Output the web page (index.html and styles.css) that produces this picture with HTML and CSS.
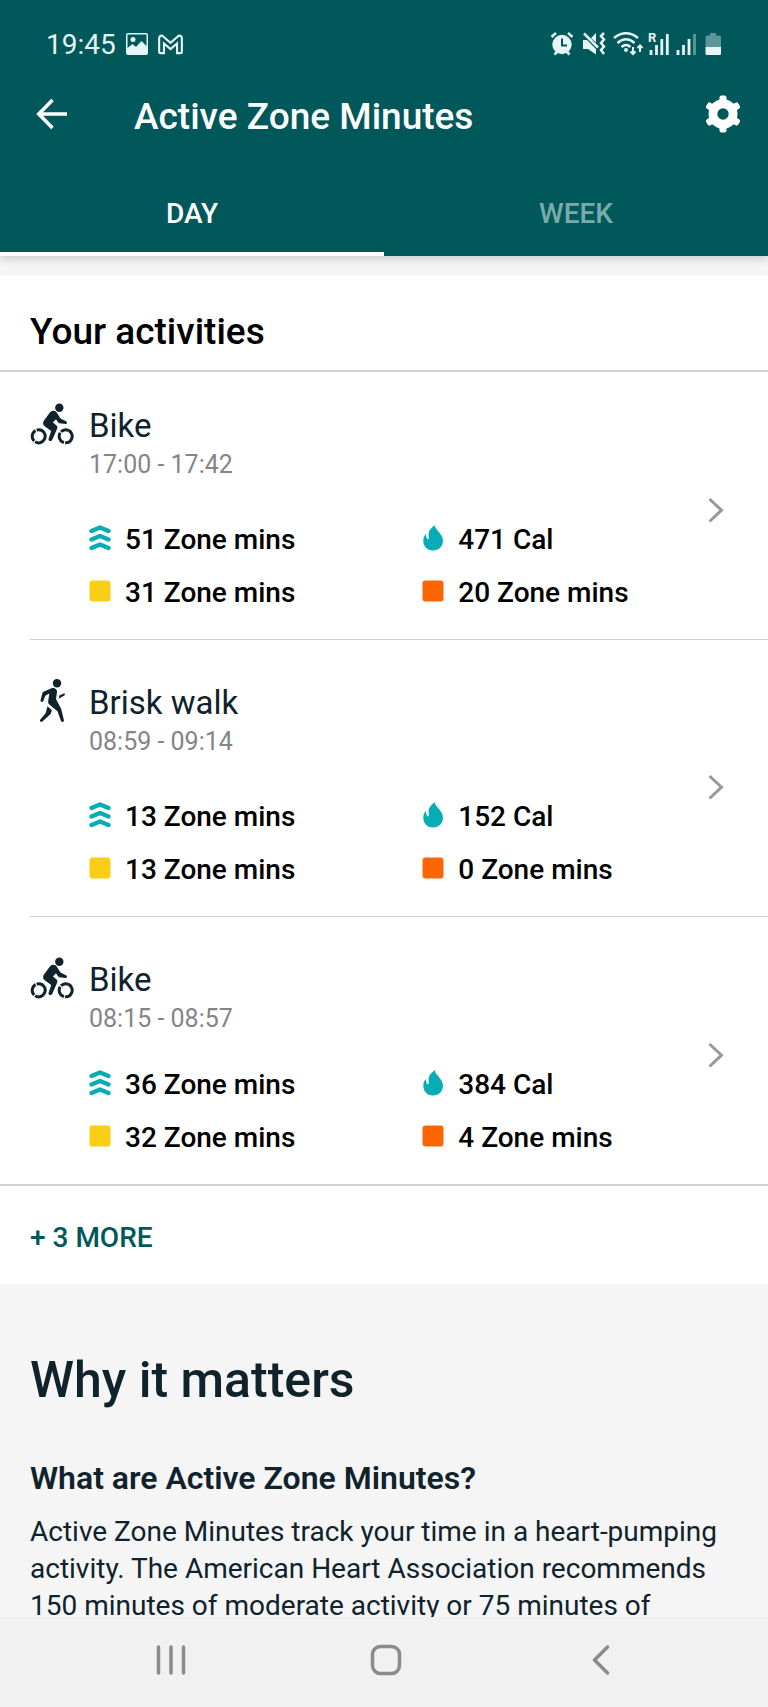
FILE: index.html
```html
<!DOCTYPE html>
<html lang="en">
<head>
<meta charset="utf-8">
<meta name="viewport" content="width=device-width, initial-scale=1">
<title>Active Zone Minutes</title>
<link rel="stylesheet" href="styles.css">
</head>
<body class="screen">
<svg class="sprite" aria-hidden="true">
  <symbol id="bike" viewBox="0 0 44 44">
    <circle cx="29.3" cy="5.7" r="4.2"/>
    <path d="M22 9C24 8.200 26 9 27 11L30.500 16.500L36 19.200C37.600 20 37.300 22 35.500 21.900L29.500 21.200C28.800 21 28.300 20.700 27.800 20L26 17.300L22.900 20.600L26.300 23.200C27.500 24.200 27.600 25.300 27.200 26.500L22.300 37.800C21.300 40 17.900 39 18.600 36.700L21.200 28.900L15 24.500C12.800 22.900 12.500 20.500 14 18.500L19.500 11C20.200 10 21 9.400 22 9Z"/>
    <g fill="none" stroke="currentColor" stroke-width="3">
      <circle cx="8.700" cy="34.300" r="6.500" stroke-dasharray="17.500 1.200 12 1.200 7.740 1.200" transform="rotate(-36 8.700 34.300)"/>
      <circle cx="35.700" cy="34.300" r="6.500" stroke-dasharray="17.500 1.200 12 1.200 7.740 1.200" transform="rotate(-64 35.700 34.300)"/>
    </g>
  </symbol>
  <symbol id="walk" viewBox="0 0 44 44">
    <circle cx="27" cy="4.200" r="4.200"/>
    <path d="M21.500 9.200C24 8.300 27.300 10 27 13L26 20L30.500 28.500C31 29.600 31.300 30.500 31.600 31.500L34 41.500C34.200 43 31.500 43.500 31 42L27.500 32.300L19.300 25.500C18.300 24.600 18 23.500 18.200 22.200L19.300 14.500L15.300 16.700L13.300 22C12.700 23.600 10.300 23 10.500 21.300L12.300 14.500C12.600 13.500 13 13.100 14 12.500Z"/>
    <path d="M17.500 27.300L21.900 31.200L20.600 35L12.400 42.500C11 43.500 9.200 42 10.200 40.700L15.700 34Z"/>
    <path d="M28.600 19.700L29.400 16.400L33.700 14.400C35 14 35.300 16 34.300 16.500Z"/>
  </symbol>
  <symbol id="zone" viewBox="0 0 22 26">
    <path d="M2.500 6L11 2.500L19.500 6M2.500 14.500L11 11L19.500 14.500M2.500 23L11 19.500L19.500 23" fill="none" stroke="currentColor" stroke-width="4.400" stroke-linecap="round" stroke-linejoin="round"/>
  </symbol>
  <symbol id="flame" viewBox="0 0 22 26">
    <path d="M12.500 0C13 5 21 8.500 21 15.800C21 21.500 16.700 25.500 11 25.500C5.300 25.500 1.300 21.500 1.300 15.800C1.300 12.500 2.500 10.800 3.700 9C4 11.500 4.600 13.300 6 14.700C7.400 13.400 6.500 11.500 6.600 9C6.700 5 9.500 3.500 12.500 0Z"/>
  </symbol>
  <symbol id="square" viewBox="0 0 22 22"><rect x="0.500" y="0.500" width="21" height="21" rx="3"/></symbol>
  <symbol id="chevron" viewBox="0 0 30 30"><path d="M9.500 4L21.500 15.200L9.500 26.500" fill="none" stroke="currentColor" stroke-width="3"/></symbol>
</svg>

<header class="header">
  <div class="status">
    <span class="status-time">19:45</span>
    <svg class="icon-photo" viewBox="0 0 22 22"><path fill-rule="evenodd" d="M2 0H20Q22 0 22 2V20Q22 22 20 22H2Q0 22 0 20V2Q0 0 2 0ZM1.500 1.500V15L6.500 11L10 14L15.500 8L20.500 13V1.500Z"/><circle cx="7" cy="6.500" r="2.500"/></svg>
    <svg class="icon-mail" viewBox="0 0 26 21"><path d="M1.200 18V4Q1.200 1.200 4.200 1.200L13 8.700L21.800 1.200Q24.800 1.200 24.800 4V18Q24.800 19.500 23.300 19.500H19.800V9.500L13 15.200L6.200 9.500V19.500H2.700Q1.200 19.500 1.200 18Z" fill="none" stroke="currentColor" stroke-width="2.200"/></svg>
    <svg class="status-icons" viewBox="0 0 172 24" role="img" aria-label="Alarm, vibrate, Wi-Fi, signal, battery">
      <circle cx="12" cy="12.500" r="9.700"/>
      <path d="M1.500 5L6 1M18 1L22.500 5M4.500 22.500L7 20M19.500 22.500L17 20" fill="none" stroke="currentColor" stroke-width="2.500"/>
      <path d="M12 6.500V13.500H17" class="cut"/>
      <path d="M33 8H37L46 17V22.500L38 17H33ZM41 6L46 1V10.500Z"/>
      <path d="M34 1.500L48 15.500" fill="none" stroke="currentColor" stroke-width="2.500"/>
      <path d="M54 1L51 4L54 7.500L51 11L54 14.500L51 18L54 22" fill="none" stroke="currentColor" stroke-width="2.500"/>
      <path d="M64 6Q76 -3.500 88 6M67.500 11Q76 3.500 84.500 11M71.500 15Q76 11 80.500 15" fill="none" stroke="currentColor" stroke-width="2.500"/>
      <circle cx="76" cy="18" r="2"/>
      <path d="M83 15V22M80.500 19.500L83 22L85.500 19.500M90 20V13.500M87.500 16L90 13.500L92.500 16" fill="none" stroke="currentColor" stroke-width="2"/>
      <text x="98" y="10" class="roaming">R</text>
      <path d="M101 18V23M106.500 13V23M111.800 7V23M117.300 2V23M128 18V23M133.500 13V23M139 7V23" fill="none" stroke="currentColor" stroke-width="2.800"/>
      <path d="M144.500 2V23" fill="none" stroke="currentColor" stroke-width="2.800" opacity=".4"/>
      <path d="M160 1H166V3.500H169.500Q171 3.500 171 5V15H155.500V5Q155.500 3.500 157 3.500H160Z" opacity=".4"/>
      <path d="M155.500 15H171V21.500Q171 23 169.500 23H157Q155.500 23 155.500 21.500Z"/>
    </svg>
  </div>
  <div class="appbar">
    <button class="icon-button" aria-label="Back"><svg class="icon-back" viewBox="0 0 32 32"><path d="M16.500 2L2.800 16L16.500 30M3 16H31" fill="none" stroke="currentColor" stroke-width="3.600"/></svg></button>
    <h1 class="title">Active Zone Minutes</h1>
    <button class="icon-button" aria-label="Settings"><svg class="icon-gear" viewBox="0 0 38 38">
      <g fill="currentColor"><rect x="15.500" y="0.500" width="7" height="37" rx="2"/><rect x="15.500" y="0.500" width="7" height="37" rx="2" transform="rotate(60 19 19)"/><rect x="15.500" y="0.500" width="7" height="37" rx="2" transform="rotate(120 19 19)"/><path d="M19 3L26 6L32.500 10.800L33.500 19L32.500 27.200L26 32L19 35L12 32L5.500 27.200L4.500 19L5.500 10.800L12 6Z"/></g><circle class="hole" cx="19" cy="19" r="5.700"/></svg></button>
  </div>
  <nav class="tabs" aria-label="Period">
    <button class="tab tab-active" aria-current="page">DAY</button>
    <button class="tab">WEEK</button>
  </nav>
</header>

<main class="content">
  <section class="activities">
    <h2 class="section-title">Your activities</h2>
    <a class="activity activity-first" href="#">
      <svg class="sport"><use href="#bike"/></svg>
      <div class="details">
        <h3 class="name">Bike</h3>
        <p class="time">17:00 - 17:42</p>
        <ul class="stats">
          <li class="stat"><svg class="stat-icon teal"><use href="#zone"/></svg>51 Zone mins</li>
          <li class="stat"><svg class="stat-icon teal"><use href="#flame"/></svg>471 Cal</li>
          <li class="stat"><svg class="stat-icon yellow"><use href="#square"/></svg>31 Zone mins</li>
          <li class="stat"><svg class="stat-icon orange"><use href="#square"/></svg>20 Zone mins</li>
        </ul>
      </div>
      <svg class="chevron"><use href="#chevron"/></svg>
    </a>
    <a class="activity" href="#">
      <svg class="sport"><use href="#walk"/></svg>
      <div class="details">
        <h3 class="name">Brisk walk</h3>
        <p class="time">08:59 - 09:14</p>
        <ul class="stats">
          <li class="stat"><svg class="stat-icon teal"><use href="#zone"/></svg>13 Zone mins</li>
          <li class="stat"><svg class="stat-icon teal"><use href="#flame"/></svg>152 Cal</li>
          <li class="stat"><svg class="stat-icon yellow"><use href="#square"/></svg>13 Zone mins</li>
          <li class="stat"><svg class="stat-icon orange"><use href="#square"/></svg>0 Zone mins</li>
        </ul>
      </div>
      <svg class="chevron"><use href="#chevron"/></svg>
    </a>
    <a class="activity activity-last" href="#">
      <svg class="sport"><use href="#bike"/></svg>
      <div class="details">
        <h3 class="name">Bike</h3>
        <p class="time">08:15 - 08:57</p>
        <ul class="stats">
          <li class="stat"><svg class="stat-icon teal"><use href="#zone"/></svg>36 Zone mins</li>
          <li class="stat"><svg class="stat-icon teal"><use href="#flame"/></svg>384 Cal</li>
          <li class="stat"><svg class="stat-icon yellow"><use href="#square"/></svg>32 Zone mins</li>
          <li class="stat"><svg class="stat-icon orange"><use href="#square"/></svg>4 Zone mins</li>
        </ul>
      </div>
      <svg class="chevron"><use href="#chevron"/></svg>
    </a>
    <button class="more">+ 3 MORE</button>
  </section>
  <section class="why">
    <h2 class="why-title">Why it matters</h2>
    <h3 class="why-question">What are Active Zone Minutes?</h3>
    <p class="why-text">Active Zone Minutes track your time in a heart-pumping activity. The American Heart Association recommends 150 minutes of moderate activity or 75 minutes of</p>
  </section>
</main>

<nav class="navbar" aria-label="System">
  <button class="nav-button" aria-label="Recent apps"><svg class="nav-icon" viewBox="0 0 32 32"><path d="M3.500 3V29M16 3V29M28.500 3V29" fill="none" stroke="currentColor" stroke-width="3.500" stroke-linecap="round"/></svg></button>
  <button class="nav-button" aria-label="Home"><svg class="nav-icon" viewBox="0 0 32 32"><rect x="2.500" y="2.500" width="27" height="27" rx="8" fill="none" stroke="currentColor" stroke-width="3.500"/></svg></button>
  <button class="nav-button" aria-label="Back"><svg class="nav-icon" viewBox="0 0 32 32"><path d="M22.500 3L9.500 16L22.500 29" fill="none" stroke="currentColor" stroke-width="3.500" stroke-linecap="round" stroke-linejoin="round"/></svg></button>
</nav>
</body>
</html>
```
FILE: styles.css
```css
* {
  box-sizing: border-box;
  margin: 0;
  padding: 0;
}

button {
  border: 0;
  background: none;
  color: inherit;
  font: inherit;
  cursor: pointer;
}

svg {
  display: block;
  flex: none;
  fill: currentColor;
}

.sprite {
  display: none;
}

.screen {
  display: flex;
  flex-direction: column;
  height: 100vh;
  background: #f5f5f5;
  color: #10222c;
  font-family: Roboto, "Liberation Sans", sans-serif;
  font-size: 28px;
}

/* Header */
.header {
  flex: none;
  position: relative;
  background: #00585a;
  color: #fff;
  box-shadow: 0 2px 10px rgba(0, 0, 0, 0.2);
}

.status {
  display: flex;
  align-items: center;
  height: 74px;
  padding: 14px 46px 0;
  color: #e6f5f5;
}

.status-time {
  margin-right: 10px;
}

.icon-photo {
  width: 22px;
  height: 22px;
  margin-right: 10px;
}

.icon-mail {
  width: 25px;
  height: 21px;
}

.status-icons {
  width: 172px;
  height: 24px;
  margin-left: auto;
  overflow: visible;
}

.status-icons .cut {
  fill: none;
  stroke: #00585a;
  stroke-width: 2;
}

.roaming {
  font-size: 13px;
  font-weight: 700;
}

.appbar {
  display: flex;
  align-items: center;
  height: 84px;
  padding: 0 26px 0 36px;
}

.icon-button {
  padding-bottom: 4px;
}

.icon-back {
  width: 32px;
  height: 32px;
}

.icon-gear {
  width: 38px;
  height: 38px;
}

.icon-gear .hole {
  fill: #00585a;
}

.title {
  flex: 1;
  margin-left: 66px;
  font-size: 37px;
  font-weight: 500;
}

.tabs {
  display: flex;
}

.tab {
  flex: 1;
  height: 98px;
  padding-top: 16px;
  border-bottom: 4px solid transparent;
  color: #7aabac;
  font-weight: 500;
}

.tab-active {
  border-bottom-color: #fff;
  color: #fff;
}

/* Activities */
.content {
  flex: 1;
  min-height: 0;
  overflow-y: auto;
  scrollbar-width: none;
}

.activities {
  margin-top: 19px;
  background: #fff;
}

.section-title {
  padding: 35px 30px 16px;
  border-bottom: 2px solid #cfd2d4;
  color: #000;
  font-size: 37px;
  line-height: 44px;
  font-weight: 500;
}

.activity {
  display: flex;
  margin-left: 30px;
  padding: 39px 38px 30px 0;
  border-bottom: 1px solid #cfd0d2;
  color: inherit;
  text-decoration: none;
}

.activity-first {
  padding-top: 30px;
}

.activity-last {
  margin-left: 0;
  padding-left: 30px;
  border-bottom: 2px solid #cfd0d2;
}

.sport {
  width: 44px;
  height: 44px;
}

.details {
  flex: 1;
  margin-left: 15px;
  padding-top: 4px;
}

.name {
  font-size: 33px;
  line-height: 40px;
  font-weight: 400;
}

.time {
  margin-top: 3px;
  color: #858585;
  font-size: 25px;
  line-height: 32px;
}

.stats {
  display: grid;
  grid-template-columns: 6fr 5fr;
  row-gap: 20px;
  margin-top: 42px;
  color: #000;
  font-weight: 500;
  line-height: 33px;
  list-style: none;
}

.activity-last .stats {
  margin-top: 33px;
}

.stat {
  display: flex;
  align-items: center;
}

.stat-icon {
  width: 22px;
  height: 26px;
  margin: 0 14px 4px 0;
}

.teal {
  color: #06adb5;
}

.yellow {
  color: #f9ce15;
}

.orange {
  color: #fb6502;
}

.chevron {
  align-self: center;
  width: 30px;
  height: 30px;
  margin-top: 8px;
  color: #97999c;
}

.activity-last .chevron {
  margin-top: 0;
}

.more {
  display: block;
  width: 100%;
  height: 98px;
  padding: 4px 30px 0;
  color: #00585a;
  font-weight: 500;
  text-align: left;
}

/* Why it matters */
.why {
  padding: 66px 30px 0;
}

.why-title {
  font-size: 50px;
  line-height: 60px;
  font-weight: 500;
}

.why-question {
  margin-top: 48px;
  font-size: 32px;
  line-height: 40px;
  font-weight: 600;
}

.why-text {
  margin-top: 15px;
  line-height: 37px;
}

/* System navigation */
.navbar {
  flex: none;
  position: relative;
  display: flex;
  height: 90px;
  padding: 0 60px 0 64px;
  background: #f1f1f1;
  color: #8b8b8b;
}

.nav-button {
  flex: 1;
  display: flex;
  align-items: center;
  justify-content: center;
  padding-bottom: 4px;
}

.nav-icon {
  width: 32px;
  height: 32px;
}
```
